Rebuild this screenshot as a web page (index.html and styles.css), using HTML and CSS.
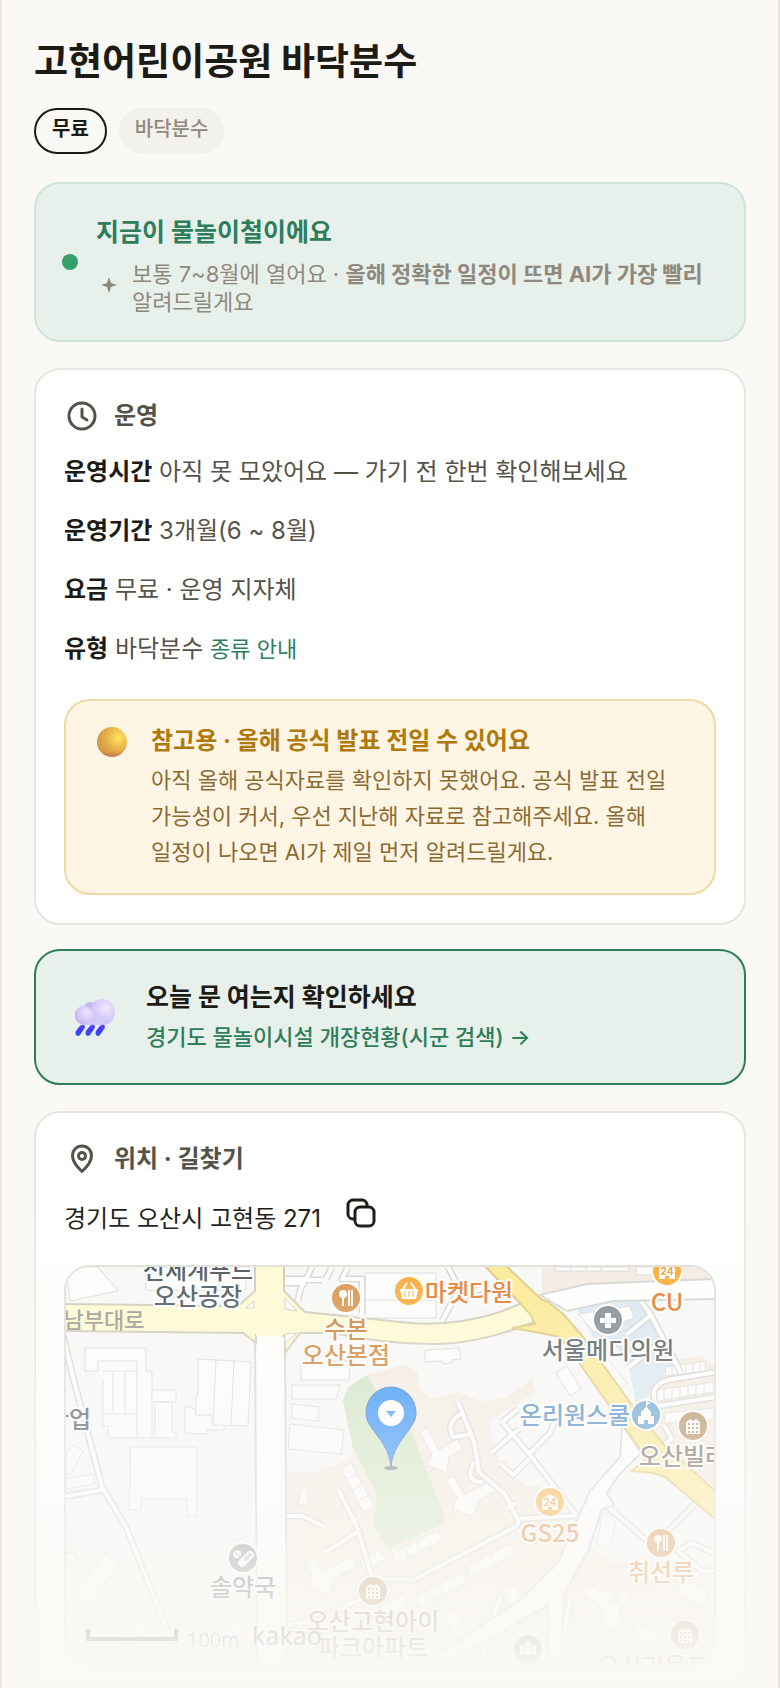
FILE: index.html
```html
<!DOCTYPE html>
<html lang="ko">
<head>
  <meta charset="UTF-8">
  <title>고현어린이공원 바닥분수</title>
  <meta name="viewport" content="width=device-width, initial-scale=1.0">
  <link rel="stylesheet" href="styles.css">
</head>
<body>
  <main class="page">
    <h1>고현어린이공원 바닥분수</h1>

    <div class="chips">
      <span class="chip chip-free">무료</span>
      <span class="chip">바닥분수</span>
    </div>

    <section class="card season">
      <span class="dot"></span>
      <div class="season-text">
        <h2>지금이 물놀이철이에요</h2>
        <div class="season-note">
          <svg class="spark" viewBox="0 0 16 16"><path d="M8 0L10 6L16 8L10 10L8 16L6 10L0 8L6 6Z"/></svg>
          <p>보통 7~8월에 열어요 · <b>올해 정확한 일정이 뜨면 AI가 가장 빨리</b> 알려드릴게요</p>
        </div>
      </div>
    </section>

    <section class="card info">
      <h2 class="card-title">
        <svg class="icon" viewBox="0 0 36 36"><circle cx="18" cy="18" r="13"/><path d="M18 11v8l5 3"/></svg>
        운영
      </h2>
      <p class="row"><b>운영시간</b> 아직 못 모았어요 — 가기 전 한번 확인해보세요</p>
      <p class="row"><b>운영기간</b> 3개월(6 ~ 8월)</p>
      <p class="row"><b>요금</b> 무료 · 운영 지자체</p>
      <p class="row"><b>유형</b> 바닥분수 <a href="#">종류 안내</a></p>

      <div class="notice">
        <svg class="ball" viewBox="0 0 30 30">
          <defs>
            <radialGradient id="ball" cx="0.72" cy="0.35" r="0.75">
              <stop offset="0" stop-color="#ffe45e"/>
              <stop offset="0.5" stop-color="#e8b548"/>
              <stop offset="1" stop-color="#cf9344"/>
            </radialGradient>
            <linearGradient id="ballShade" x1="0" y1="0" x2="0" y2="1">
              <stop offset="0.8" stop-color="#d07a60" stop-opacity="0"/>
              <stop offset="1" stop-color="#d0705c"/>
            </linearGradient>
          </defs>
          <circle cx="15" cy="15" r="15" fill="url(#ball)"/>
          <circle cx="15" cy="15" r="15" fill="url(#ballShade)"/>
        </svg>
        <div>
          <h3>참고용 · 올해 공식 발표 전일 수 있어요</h3>
          <p>아직 올해 공식자료를 확인하지 못했어요. 공식 발표 전일 가능성이 커서, 우선 지난해 자료로 참고해주세요. 올해 일정이 나오면 AI가 제일 먼저 알려드릴게요.</p>
        </div>
      </div>
    </section>

    <a class="card check" href="#">
      <svg class="rain" viewBox="0 0 42 38">
        <defs>
          <radialGradient id="puff" cx="0.65" cy="0.35" r="0.75">
            <stop offset="0" stop-color="#efe6fe"/>
            <stop offset="0.6" stop-color="#d5caf8"/>
            <stop offset="1" stop-color="#b8aef2"/>
          </radialGradient>
          <linearGradient id="drop" x1="0" y1="0" x2="0" y2="1">
            <stop offset="0" stop-color="#5a4dea"/>
            <stop offset="0.5" stop-color="#3d3bff"/>
            <stop offset="1" stop-color="#3550ff"/>
          </linearGradient>
        </defs>
        <circle cx="16" cy="10" r="6" fill="#c3b8f5"/>
        <circle cx="28" cy="14" r="13" fill="url(#puff)"/>
        <path d="M10 8a9 9 0 0 0 0 19h18c3 0 5-2 4-5L18 12c-2-3-5-4-8-4z" fill="#d3c9f8"/>
        <circle cx="10" cy="17" r="9" fill="url(#puff)"/>
        <g fill="url(#drop)">
          <path d="M5 29q2-3 5-2q2 2 0 4l-4 6q-2 2-4 0q-1-2 0-4z"/>
          <path d="M15 29q2-3 5-2q2 2 0 4l-4 6q-2 2-4 0q-1-2 0-4z"/>
          <path d="M25 29q2-3 5-2q2 2 0 4l-4 6q-2 2-4 0q-1-2 0-4z"/>
        </g>
      </svg>
      <span class="check-text">
        <strong>오늘 문 여는지 확인하세요</strong>
        <span>경기도 물놀이시설 개장현황(시군 검색) →</span>
      </span>
    </a>

    <section class="card">
      <h2 class="card-title">
        <svg class="icon" viewBox="0 0 36 36"><path d="M18 30.500C12 25 8.500 20 8.500 14.500a9.500 9.500 0 0 1 19 0c0 5.500-3.500 10.500-9.500 16z"/><circle cx="18" cy="15" r="3.500"/></svg>
        위치 · 길찾기
      </h2>
      <div class="address">
        <span>경기도 오산시 고현동 271</span>
        <button type="button" class="copy" aria-label="주소 복사">
          <svg viewBox="0 0 28 28"><rect x="8" y="8" width="19" height="19" rx="5"/><path d="M8 20H6a5 5 0 0 1-5-5V6a5 5 0 0 1 5-5h9a5 5 0 0 1 5 5v2"/></svg>
        </button>
      </div>

      <div class="map">
        <svg viewBox="66 1266 648 396" preserveAspectRatio="xMidYMid slice">
          <defs>
            <symbol id="fork" viewBox="-14 -14 28 28"><circle cx="-3" cy="-4" r="4"/><path d="M-4 0h2v8h-2zM2-8h2V8H2zM5-8h2V8H5z"/></symbol>
            <symbol id="flat" viewBox="-14 -14 28 28"><path fill-rule="evenodd" d="M-7-4l4-3 3 2 3-2 4 3V8H-7zM-5-3v2h2v-2zM-1-3v2h2v-2zM3-3v2h2v-2zM-5 1v2h2V1zM-1 1v2h2V1zM3 1v2h2V1zM-5 5v2h2V5zM-1 5v2h2V5zM3 5v2h2V5z"/></symbol>
            <symbol id="store" viewBox="-14 -14 28 28"><path d="M-8-3l8-5 8 5V8H2V5h-4v3h-6z"/></symbol>
          </defs>

          <!-- land -->
          <rect x="66" y="1266" width="648" height="396" fill="#f8f8f8"/>
          <path fill="#f3ebe0" d="M542 1266h172v12l-127 5-45 10zM664 1360l38-5 12 10v120l-60-42-14-30zM287 1472h28l35-15 27-70-10-13 38-11 12 8 4 18 12 9 25-7 24 10 22-4 28-18 5 12-47 28 2 20 12 30 23 16h12l20 30 28 14-12 32-30 34-130 70H287z"/>
          <path fill="#f3ebe0" d="M587 1545l24 17 50-2 53 56v46H440l110-62z"/>
          <path fill="#d9e6f0" d="M575 1303l66-3 20 32 18 26-18 20-24 30-8-40-14-24-22-8z"/>
          <path fill="#cfe3c3" d="M348 1386l19-12 10 16 33 37 35 90-2 6-55 25-15-25 4-30-24-46-10-47z"/>

          <!-- buildings -->
          <g fill="#fdfdfd" stroke="#d8d8d8">
            <path d="M66 1266h32l20 24-48 10zM146 1266h100v23H146zM85 1347h61v23h6v67h-44v-12h-5v-55H85z"/>
            <path d="M98 1370v-10h39v77M103 1370h34M103 1413h34M113 1370v43M125 1370v43M152 1389h24v12h-24zM155 1401h17v30h4v6h-21z"/>
            <path d="M198 1358l53 3-3 64-37-1v-10h-15v-20h2zM216 1358l-3 66M234 1359l-3 65"/>
            <path d="M185 1405l10 3v6h17v10h12v5h-17v4l-22-1zM130 1446h67v69h-10v-17h-46v11h-12v-16h1z"/>
            <path d="M66 1452l8-8 9 6-13 24-4-1zM66 1478l27-5 2 10-29 5zM66 1552l8-1 3 9-11 5zM105 1552l14 11-30 40-14-10zM233 1541l15-6v10M116 1630l20-8 20 6-34 18zM232 1620h14v29h-14z"/>
            <path d="M301 1360h49l-1 19h-48zM292 1384h48l-4 14h-44zM292 1403l27 3-1 14-26-3zM290 1423l54 6-3 24-53-5zM303 1487h5v17h-11z"/>
            <path d="M365 1272h71v45h-71zM365 1299h71M425 1349l34-2 2 11-9 1v3l-10 1v-3l-17 1zM556 1372l11-7 14 23-11 7zM578 1313l52-8 4 12-40 14zM609 1360l18 22-7 5-20-25z"/>
            <path d="M341 1467l10-5 23 43-11 6zM346 1478l11-5M352 1489l11-6M358 1500l11-6M419 1431l8-4 12 22 18-11 6 10-14 8-2 16-20-8 5-11zM445 1480l9-5 10 19 30-16 5 10-20 11-5 16-21-6 4-13z"/>
            <path d="M392 1553l46-24 5 10-46 24zM404 1547l5 10M416 1541l5 10M466 1566l45-24 5 11-45 23zM478 1560l5 10M490 1554l5 10M415 1595l46-23 5 10-46 24zM427 1590l5 10M439 1584l5 10M380 1605l24-12 5 10-20 12z"/>
            <path d="M306 1562l9-5 7 14 30-15 4 10-23 12-4 15-21-8 4-11zM360 1560l20-12 6 10-22 12zM503 1590l12-6 10 20-12 6zM444 1616l12-6 10 22-12 6z"/>
            <path d="M602 1515l8-3 5 11-5 24-13-4zM580 1588l8-6 14 10 8-5 8 12-8 4 11-16 10 8-12 13 4 18-18 2-2-20zM684 1575l25 17-5 15-26-16zM636 1620l24 12-8 16-22-14zM580 1655l15-17 8 6-14 18z"/>
            <path d="M555 1266h74v4h-74zM571 1266v4M586 1266v4M601 1266v4M636 1266h16v8h-16zM665 1366l40-6 1 10-40 5zM672 1365v9M679 1364v9M686 1363v9M693 1362v9M700 1361v9M656 1389l58-8v10l-57 9zM664 1388v11M672 1387v11M680 1386v11M688 1385v10M696 1384v10M704 1383v10M664 1412l50-5v11l-49 4z"/>
          </g>

          <!-- side streets -->
          <g class="street-edge">
            <path id="s1" d="M62 1330l12 50 28 106 24 40 56 140M62 1496l40-7"/>
            <path id="s2" d="M287 1515h16l20 10M339 1490l20 40-35 22M359 1532l13 44M350 1522l7-3M287 1624l30-4 70-36M385 1578l28 1 100-52q8-4 4-10l-12-24-26-22-5-30-16-40M463 1412q-18 8-10 24l20-3M474 1461q-10 20 8 20M517 1518l70-4M508 1507l8-5"/>
            <path id="s3" d="M491 1452l28-24M502 1421l28 33M502 1421l16-13M530 1454l46 60M528 1454l22-22 4-10M500 1462l13 12 16-16"/>
            <path id="s4" d="M641 1300l10 14 30 58M651 1314l-25 20M655 1345l-27 22M655 1400q-6-18 18-22l44-7M658 1405l58-9M672 1438l-8-14M672 1438l-20 14M607 1505l46 40 16-16 30-30M714 1570h-12l-24-20 14-8 22 10M430 1664l130-68M500 1596l-20 66M570 1600l-8 40"/>
            <path id="s5" d="M284 1282h20q-4 4-6 18M312 1266l-6 12h-22M322 1279h-30M332 1266l-6 12M348 1266l-6 12h20v34M448 1266l16 30 20-10M442 1320l22-40"/>
          </g>
          <g class="street">
            <use href="#s1"/><use href="#s2"/><use href="#s3"/><use href="#s4"/><use href="#s5"/>
          </g>

          <!-- wide roads -->
          <g fill="#fff" stroke="#d3d3d3" stroke-width="2">
            <path d="M255 1330l2 340h30l-2-335z"/>
            <path d="M540 1294l47-11 130-5v20l-104 2-46 10z"/>
            <path d="M622 1425l-2 31-30 34-10 22-22 50-34 34-98 66h22l100-58v65h12l4-77 24-42 14-42 12-4-7-12 12-18 22-22-16-24z"/>
          </g>
          <path fill="#fffbd0" stroke="#cfc9b8" stroke-width="2" d="M60 1303l178 2 17-15v-26h29v26l21 21 95 10q50 6 100-10l35-14 20 14q-60 30-115 32-50 1-107-11h-33l-15 20v-18h-29v8l-13-10-183-2z"/>
          <path fill="#fffbd0" d="M256 1260h27v75h-27z"/>
          <path fill="#fff" stroke="#cfc9b8" d="M254 1300v7h-8zM285 1297l12 13-12-2zM285 1333l12-1-12 10z"/>
          <path fill="#fde98f" stroke="#dcc77a" stroke-width="2" d="M484 1264h21l36 34 7 3 14 11 18 20 60 83 25 30 56 50v28l-56-47-12-4-21-2 18-16-10-6-20-28-40-57-20-27-20-4-28-5 23-4-4-9z"/>

          <!-- places -->
          <g stroke="#fff" stroke-width="2">
            <circle cx="346" cy="1297" r="15" fill="#d98e43"/>
            <circle cx="409" cy="1290" r="15" fill="#fba62e"/>
            <circle cx="667" cy="1270" r="15" fill="#fba62e"/>
            <circle cx="608" cy="1319" r="15" fill="#78858b"/>
            <circle cx="646" cy="1414" r="15" fill="#5c9bd2"/>
            <circle cx="693" cy="1425" r="15" fill="#ad8658"/>
            <circle cx="550" cy="1501" r="15" fill="#fba62e"/>
            <circle cx="661" cy="1542" r="15" fill="#d98e43"/>
            <circle cx="243" cy="1557" r="15" fill="#78858b"/>
            <circle cx="373" cy="1590" r="15" fill="#ad8658"/>
            <circle cx="528" cy="1648" r="15" fill="#78858b"/>
            <circle cx="685" cy="1634" r="15" fill="#ad8658"/>
          </g>
          <g fill="#fff">
            <use href="#fork" x="332" y="1283" width="28" height="28"/>
            <use href="#fork" x="647" y="1528" width="28" height="28"/>
            <use href="#flat" x="679" y="1411" width="28" height="28"/>
            <use href="#flat" x="359" y="1576" width="28" height="28"/>
            <use href="#flat" x="671" y="1620" width="28" height="28"/>
            <use href="#store" x="653" y="1256" width="28" height="28"/>
            <use href="#store" x="536" y="1487" width="28" height="28"/>
            <path d="M400 1288h18l-2 10h-14z"/>
            <path d="M403 1288l4-6M415 1288l-4-6" stroke="#fff" stroke-width="2"/>
            <path d="M405 1290v6M409 1290v6M413 1290v6" stroke="#fba62e"/>
            <path d="M605 1312h6v5h5v5h-5v5h-6v-5h-5v-5h5z"/>
            <path d="M638 1423v-8h3v-4l5-5v-6l5 2-4 2v2l4 5v4h3v8h-6v-4h-4v4z"/>
            <circle cx="237" cy="1553" r="4"/>
            <path d="M242 1562l8-8" stroke="#fff" stroke-width="8" stroke-linecap="round"/>
            <path d="M246 1558l4-4" stroke="#aab1b4" stroke-width="4" stroke-linecap="round"/>
            <path d="M234 1550l6 6" stroke="#78858b" stroke-width="1"/>
            <path d="M520 1654v-8l2-3 2 3v8zM525 1654v-12l3-4 3 4v12zM532 1654v-8l2-3 2 3v8z"/>
          </g>
          <g class="num">
            <text x="667" y="1274">24</text>
            <text x="550" y="1505">24</text>
          </g>

          <g class="label">
            <text x="198" y="1278">신세계푸드</text>
            <text x="198" y="1304">오산공장</text>
            <text x="104" y="1327" class="road-name">남부대로</text>
            <text x="69" y="1427">산업</text>
            <text x="608" y="1358">서울메디의원</text>
            <text x="243" y="1595">솔약국</text>
            <g class="food">
              <text x="346" y="1337">수본</text>
              <text x="346" y="1363">오산본점</text>
              <text x="661" y="1580">취선루</text>
            </g>
            <g class="shop">
              <text x="469" y="1300">마켓다원</text>
              <text x="667" y="1310">CU</text>
              <text x="550" y="1541">GS25</text>
            </g>
            <text x="575" y="1423" class="school">온리원스쿨</text>
            <g class="home">
              <text x="683" y="1464">오산빌라</text>
              <text x="373" y="1629">오산고현아이</text>
              <text x="373" y="1655">파크아파트</text>
              <text x="653" y="1674">오산리움프</text>
            </g>
          </g>

          <!-- scale -->
          <path d="M88 1628v10h88v-10" fill="none" stroke="#222" stroke-width="4"/>
          <text x="187" y="1646" class="scale">100m</text>
          <text x="252" y="1644" class="brand">kakao</text>

          <!-- marker -->
          <ellipse cx="391" cy="1467" rx="7" ry="2" fill="#777"/>
          <path fill="#1f86f9" stroke="#2a62c8" d="M391 1465c-2-16-9-24-17-35-5-7-8-11-8-18a25 26 0 0 1 50 0c0 7-3 11-8 18-8 11-15 19-17 35z"/>
          <circle cx="391" cy="1412" r="13" fill="#fff"/>
          <path fill="#2f8ffa" d="M386 1410h10l-5 6z"/>
        </svg>
      </div>
    </section>

    <div class="fade"></div>
  </main>
</body>
</html>
```

FILE: styles.css
```css
* {
  box-sizing: border-box;
}

body {
  margin: 0;
  background: #faf9f6;
  color: #1d1b16;
  font-family: Inter, "Noto Sans CJK KR", sans-serif;
  word-break: keep-all;
}

h1, h2, h3, p {
  margin: 0;
}

.page {
  position: relative;
  height: 100vh;
  overflow: hidden;
  padding: 36px 32px 0;
  border-left: 2px solid #e8e6df;
  border-right: 2px solid #e8e6df;
}

h1 {
  font-size: 37px;
  line-height: 52px;
}

.chips {
  display: flex;
  gap: 12px;
  margin: 20px 0 28px;
}

.chip {
  padding: 7px 16px 11px;
  border-radius: 23px;
  background: #f2f1ec;
  color: #8f897d;
  font-size: 20px;
  font-weight: 500;
  line-height: 28px;
}

.chip-free {
  padding: 5px 16px 9px;
  border: 2px solid #1d1b16;
  background: none;
  color: #1d1b16;
  font-weight: 700;
}

.card {
  display: block;
  margin-bottom: 26px;
  padding: 28px;
  border: 2px solid #e8e6df;
  border-radius: 26px;
  background: #fff;
}

.season {
  display: flex;
  align-items: center;
  gap: 18px;
  padding: 24px 26px;
  border-color: #cfe4d8;
  background: #e8f0eb;
}

.dot {
  flex: none;
  width: 16px;
  height: 16px;
  border-radius: 50%;
  background: #36a06c;
}

.season-text {
  padding-top: 6px;
}

.season h2 {
  color: #2e7d5b;
  font-size: 25px;
  line-height: 36px;
}

.season-note {
  display: flex;
  align-items: center;
  gap: 15px;
  margin-top: 10px;
  padding-left: 5px;
  color: #8f897d;
  font-size: 22px;
  line-height: 28px;
}

.spark {
  flex: none;
  width: 16px;
  height: 16px;
  margin-bottom: 6px;
  fill: currentColor;
}

.card-title {
  display: flex;
  align-items: center;
  gap: 14px;
  margin-bottom: 8px;
  color: #55524a;
  font-size: 24px;
  line-height: 36px;
}

.icon {
  width: 36px;
  height: 36px;
  fill: none;
  stroke: currentColor;
  stroke-width: 3px;
  stroke-linecap: round;
  stroke-linejoin: round;
}

.info {
  margin-bottom: 24px;
}

.row {
  padding: 8px 0;
  color: #55524a;
  font-size: 24px;
  line-height: 43px;
}

.row b {
  color: #1d1b16;
}

.row a {
  color: #2e7d5b;
  font-size: 22px;
  text-decoration: none;
}

.notice {
  display: flex;
  gap: 24px;
  margin-top: 20px;
  padding: 22px 31px 23px;
  border: 2px solid #efd9a4;
  border-radius: 26px;
  background: #fff5e4;
  color: #8b6b33;
  font-size: 22px;
  line-height: 36px;
}

.notice h3 {
  margin-bottom: 3px;
  color: #b0790c;
  font-size: 24px;
}

.ball {
  flex: none;
  width: 30px;
  height: 30px;
  margin-top: 4px;
}

.check {
  display: flex;
  align-items: center;
  gap: 30px;
  padding: 26px 38px;
  border-color: #2e7d5b;
  background: #e8f0eb;
  color: #2e7d5b;
  font-size: 22px;
  font-weight: 500;
  line-height: 40px;
  text-decoration: none;
}

.rain {
  width: 42px;
  height: 38px;
}

.check-text {
  display: flex;
  flex-direction: column;
}

.check strong {
  color: #1d1b16;
  font-size: 25px;
}

.address {
  display: flex;
  gap: 26px;
  margin: 22px 0 26px;
  font-size: 24px;
  line-height: 40px;
}

.copy {
  height: 28px;
  padding: 0;
  border: 0;
  background: none;
  color: #1d1b16;
}

.copy svg {
  display: block;
  width: 28px;
  height: 28px;
  fill: none;
  stroke: currentColor;
  stroke-width: 3px;
  overflow: visible;
}

/* map */
.map {
  overflow: hidden;
  border: 2px solid #e0ded7;
  border-radius: 26px;
}

.map svg {
  display: block;
  width: 100%;
  height: 396px;
}

.street-edge,
.street {
  fill: none;
  stroke: #d3d3d3;
  stroke-width: 7px;
  stroke-linejoin: round;
}

.street {
  stroke: #fff;
  stroke-width: 4px;
}

.label {
  fill: #414d54;
  stroke: #fff;
  stroke-width: 4px;
  stroke-linejoin: round;
  paint-order: stroke;
  font-family: "Noto Sans CJK KR", sans-serif;
  font-size: 24px;
  font-weight: 500;
  text-anchor: middle;
}

.label .road-name {
  fill: #94918c;
  stroke: none;
  font-size: 22px;
}

.food {
  fill: #cc7a28;
}

.shop {
  fill: #e2741c;
}

.school {
  fill: #3d82c4;
}

.home {
  fill: #6d5c50;
}

.num {
  fill: #e79a2c;
  font-size: 10px;
  font-weight: 700;
  text-anchor: middle;
}

.scale,
.brand {
  fill: #333;
  font-family: "Noto Sans", sans-serif;
  font-size: 20px;
  font-weight: 300;
}

.brand {
  font-size: 25px;
  font-weight: 400;
}

.fade {
  position: absolute;
  right: -2px;
  bottom: 0;
  left: -2px;
  height: 480px;
  background: linear-gradient(rgba(250, 249, 245, 0), #faf9f5);
  pointer-events: none;
}
```
